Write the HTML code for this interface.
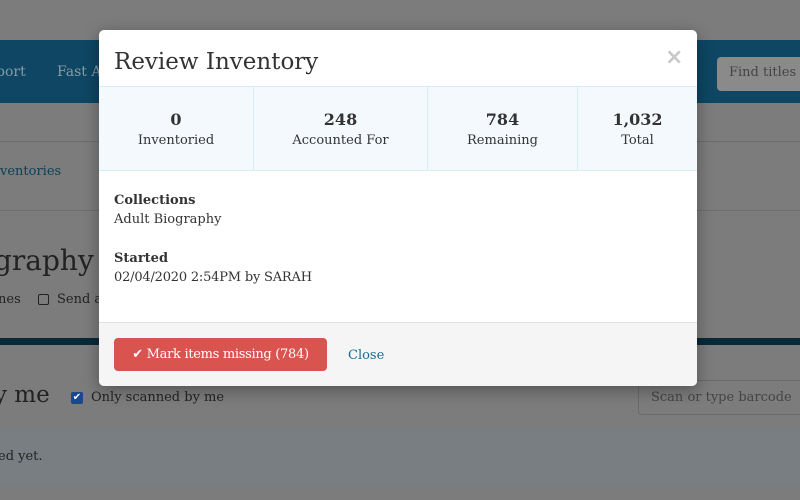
<!DOCTYPE html>
<html><head><style>
*{margin:0;padding:0;box-sizing:border-box}
body{width:800px;height:500px;overflow:hidden;background:#7c7c7c;font-family:"DejaVu Serif","Liberation Serif",serif;color:#333;position:relative;white-space:nowrap}
.a{position:absolute}
.nav{left:0;top:40px;width:800px;height:63px;background:#0e4663}
.modal{left:99px;top:30px;width:598px;height:356px;background:#fff;border-radius:5px;overflow:hidden;box-shadow:0 4px 16px rgba(0,0,0,.35)}
.stats{position:absolute;left:0;top:56px;width:598px;height:85px;background:#f3f9fd;border-top:1px solid #d3eef7;border-bottom:1px solid #d3eef7}
.col{position:absolute;top:0;height:83px;text-align:center;border-right:1px solid #d3eef7}
.col b{display:block;margin-top:23px;font-size:16px}
.col span{display:block;margin-top:4px;font-size:13px}
.foot{position:absolute;left:0;top:292px;width:598px;height:64px;background:#f5f5f5;border-top:1px solid #e3e3e3}
</style></head><body>
<div class="a nav"></div>
<div class="a" style="left:-4px;top:64px;color:#8a9aa4;font-size:14px">port</div>
<div class="a" style="left:57px;top:64px;color:#8a9aa4;font-size:14px">Fast A</div>
<div class="a" style="left:717px;top:57px;width:90px;height:34px;background:#8a8a8a;border-radius:4px;color:#444;font-size:13px;padding:8px 12px">Find titles</div>
<div class="a" style="left:0;top:141px;width:800px;height:1px;background:#6c6c6c"></div>
<div class="a" style="left:0;top:164px;color:#0c3f53;font-size:13px">ventories</div>
<div class="a" style="left:0;top:210px;width:800px;height:1px;background:#6e6e6e"></div>
<div class="a" style="left:-6px;top:244px;font-size:28px;color:#222">graphy</div>
<div class="a" style="left:-2px;top:292px;font-size:13px;color:#222">nes</div>
<div class="a" style="left:38px;top:294px;width:11px;height:11px;border:1px solid #222;border-radius:2px"></div>
<div class="a" style="left:57px;top:292px;font-size:13px;color:#222">Send a</div>
<div class="a" style="left:0;top:338px;width:800px;height:7px;background:#082a38"></div>
<div class="a" style="left:-6px;top:382px;font-size:23px;color:#222">y me</div>
<div class="a" style="left:71px;top:392px;width:12px;height:12px;background:#1a4790;border-radius:2px;color:#fff;font-size:10px;line-height:12px;text-align:center">✔</div>
<div class="a" style="left:91px;top:390px;font-size:13px;color:#222">Only scanned by me</div>
<div class="a" style="left:638px;top:380px;width:170px;height:35px;border:1px solid #6a6a6a;border-radius:4px;color:#444;font-size:13px;padding:9px 12px">Scan or type barcode</div>
<div class="a" style="left:0;top:430px;width:800px;height:55px;background:#787e82;border-top:1px solid #6f7f88;border-bottom:1px solid #6f7f88"></div>
<div class="a" style="left:-2px;top:449px;font-size:13px;color:#222">ed yet.</div>

<div class="a modal">
  <div class="a" style="left:15px;top:19px;font-size:23px;color:#333">Review Inventory</div>
  <div class="a" style="left:566px;top:15px;font-size:22px;color:#c8c8c8;font-family:'DejaVu Sans',sans-serif;font-weight:bold">×</div>
  <div class="stats">
    <div class="col" style="left:0;width:155px"><b>0</b><span>Inventoried</span></div>
    <div class="col" style="left:155px;width:174px"><b>248</b><span>Accounted For</span></div>
    <div class="col" style="left:329px;width:150px"><b>784</b><span>Remaining</span></div>
    <div class="col" style="left:479px;width:119px;border:0"><b>1,032</b><span>Total</span></div>
  </div>
  <div class="a" style="left:15px;top:163px;font-size:13px;font-weight:bold">Collections</div>
  <div class="a" style="left:15px;top:182px;font-size:13px">Adult Biography</div>
  <div class="a" style="left:15px;top:221px;font-size:13px;font-weight:bold">Started</div>
  <div class="a" style="left:15px;top:240px;font-size:13px;letter-spacing:-.2px">02/04/2020 2:54PM by SARAH</div>
  <div class="foot">
    <div class="a" style="left:15px;top:15px;width:213px;height:33px;background:#d9534f;border-radius:4px;color:#fff;font-size:13px;line-height:33px;text-align:center;letter-spacing:-.3px">✔ Mark items missing (784)</div>
    <div class="a" style="left:249px;top:25px;color:#1d6b8f;font-size:13px">Close</div>
  </div>
</div>
</body></html>
